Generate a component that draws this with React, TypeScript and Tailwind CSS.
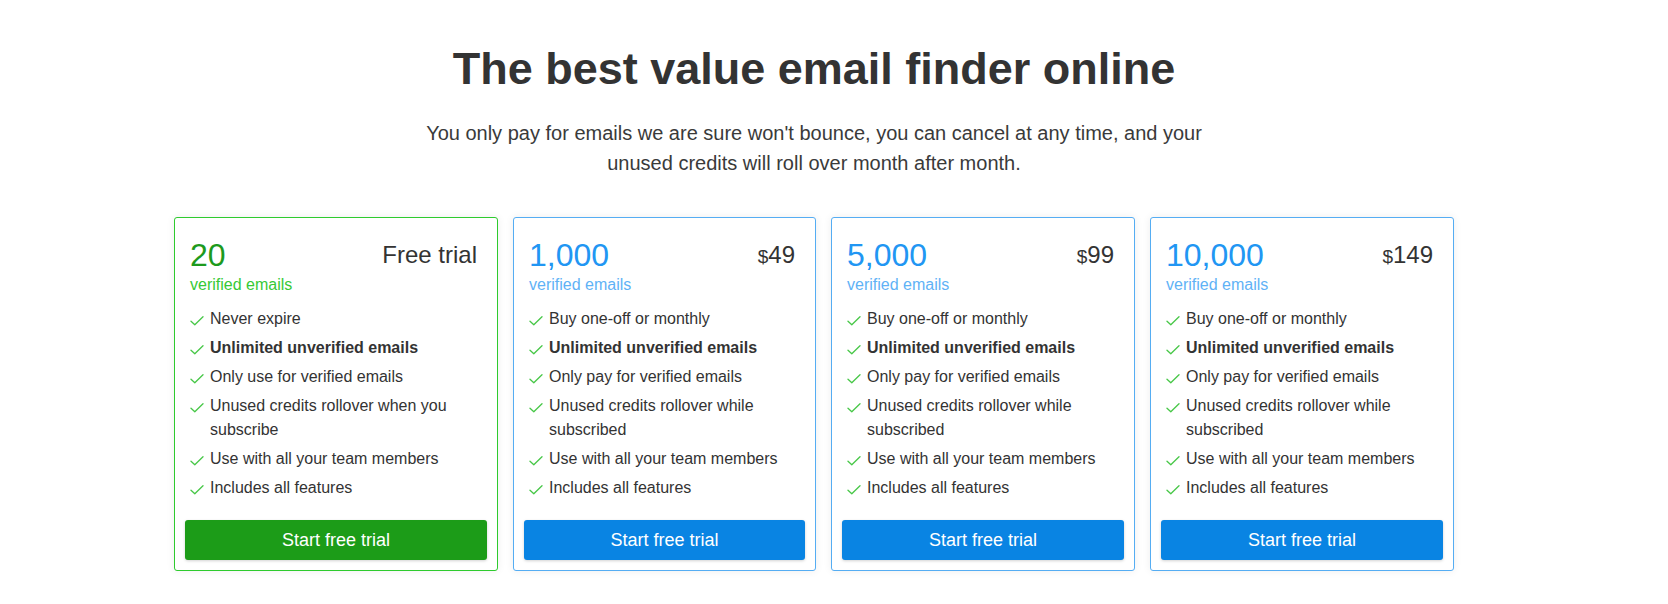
import React from "react";

type Plan = {
  count: string;
  price: React.ReactNode;
  features: { text: string; bold?: boolean }[];
  green?: boolean;
  width: string;
};

const Check = () => (
  <svg width="14" height="10" viewBox="0 0 14 10" className="mt-[9px] mr-[6px] shrink-0" fill="none">
    <path d="M1 5.2 L4.8 8.8 L13 0.8" stroke="#47c747" strokeWidth="1.3" strokeLinecap="round" strokeLinejoin="round" />
  </svg>
);

const paidFeatures = [
  { text: "Buy one-off or monthly" },
  { text: "Unlimited unverified emails", bold: true },
  { text: "Only pay for verified emails" },
  { text: "Unused credits rollover while subscribed" },
  { text: "Use with all your team members" },
  { text: "Includes all features" },
];

const Price = ({ v }: { v: string }) => (
  <span>
    <span className="text-[19px] leading-none">$</span>
    {v}
  </span>
);

const plans: Plan[] = [
  {
    count: "20",
    price: "Free trial",
    green: true,
    width: "w-[324px]",
    features: [
      { text: "Never expire" },
      { text: "Unlimited unverified emails", bold: true },
      { text: "Only use for verified emails" },
      { text: "Unused credits rollover when you subscribe" },
      { text: "Use with all your team members" },
      { text: "Includes all features" },
    ],
  },
  { count: "1,000", price: <Price v="49" />, width: "w-[303px]", features: paidFeatures },
  { count: "5,000", price: <Price v="99" />, width: "w-[304px]", features: paidFeatures },
  { count: "10,000", price: <Price v="149" />, width: "w-[304px]", features: paidFeatures },
];

function Card({ p }: { p: Plan }) {
  return (
    <div
      className={`${p.width} shrink-0 bg-white border rounded-[3px] shadow-[0_0_8px_rgba(0,0,0,0.07)] px-[10px] pt-[19px] pb-[10px] flex flex-col ${
        p.green ? "border-[#2ecb2e]" : "border-[#55adf3]"
      }`}
    >
      <div className="pl-[5px] pr-[10px]">
        <div className="flex justify-between items-start h-[36px]">
          <span className={`text-[32px] leading-[36px] ${p.green ? "text-[#1d9a1d]" : "text-[#2196f3]"}`}>{p.count}</span>
          <span className="text-[24px] leading-[36px] text-[#333]">{p.price}</span>
        </div>
        <div className={`mt-[1px] text-[16px] leading-[22px] ${p.green ? "text-[#36c936]" : "text-[#5fb2f6]"}`}>verified emails</div>
      </div>
      <ul className="mt-[10.5px] pl-[5px] pr-[4px] flex flex-col gap-[5px]">
        {p.features.map((f, i) => (
          <li key={i} className="flex items-start text-[16px] leading-[24px] text-[#333]">
            <Check />
            <span className={f.bold ? "font-bold" : ""}>{f.text}</span>
          </li>
        ))}
      </ul>
      <button
        className={`mt-[20.5px] h-[40px] w-full rounded-[3px] text-white text-[18px] shadow-[0_1px_3px_rgba(0,0,0,0.18)] ${
          p.green ? "bg-[#1c9c18]" : "bg-[#0984e3]"
        }`}
      >
        Start free trial
      </button>
    </div>
  );
}

export default function App() {
  return (
    <div className="w-[1668px] h-[604px] bg-white font-['Liberation_Sans',Arial,sans-serif] text-[#333]">
      <div className="w-[1628px] flex flex-col items-center pt-[41.6px]">
        <h1 className="text-[45px] leading-[54px] font-bold text-[#333]">The best value email finder online</h1>
        <p className="mt-[22px] max-w-[800px] text-center text-[20px] leading-[30px] text-[#3a3a3a]">
          You only pay for emails we are sure won't bounce, you can cancel at any time, and your unused credits will
          roll over month after month.
        </p>
        <div className="mt-[39.6px] flex gap-[15px] items-stretch">
          {plans.map((p, i) => (
            <Card key={i} p={p} />
          ))}
        </div>
      </div>
    </div>
  );
}
